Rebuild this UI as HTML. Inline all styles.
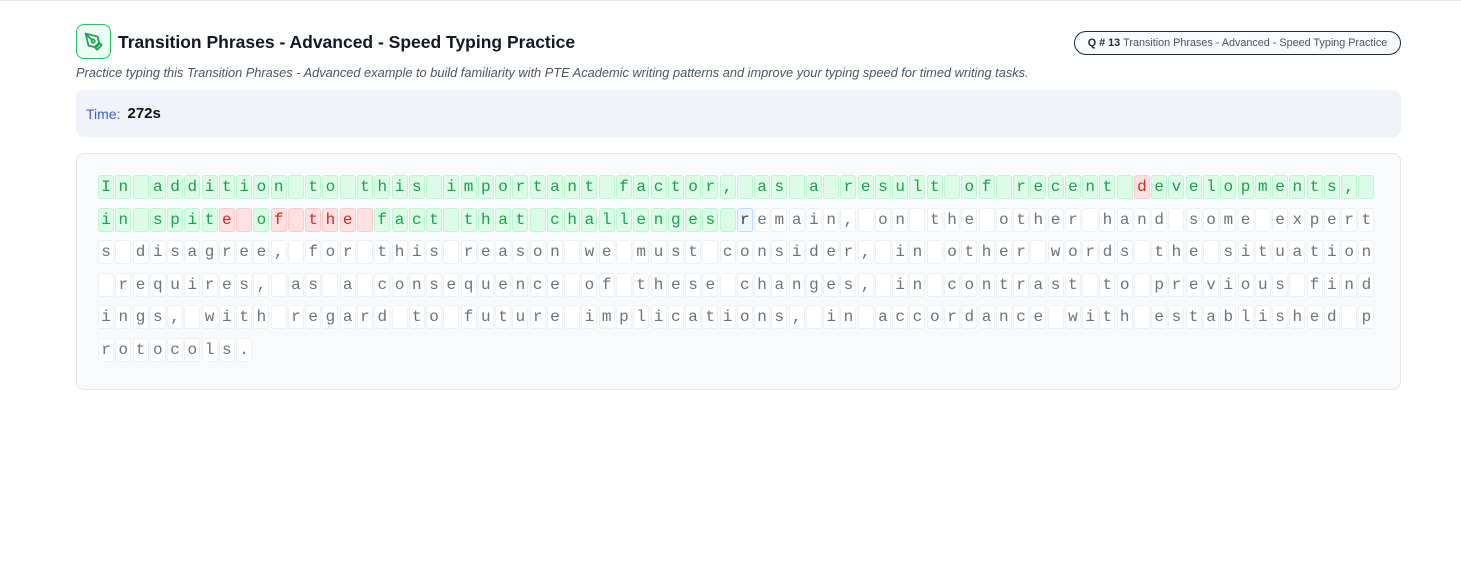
<!DOCTYPE html>
<html><head><meta charset="utf-8"><style>
*{box-sizing:border-box;margin:0;padding:0}
body{width:1461px;height:563px;background:#fff;font-family:"Liberation Sans",sans-serif;position:relative;overflow:hidden;border-top:1px solid #e5e7eb}
.icon{position:absolute;left:76px;top:23px;width:35px;height:35px;border:1.5px solid #22c55e;border-radius:8px;background:#ecfdf3;display:flex;align-items:center;justify-content:center}
h1{position:absolute;left:118px;top:31px;font-size:17.5px;font-weight:bold;color:#111827}
.sub{position:absolute;left:76px;top:64px;font-size:12.8px;font-style:italic;color:#4b5563}
.badge{position:absolute;left:1074px;top:30px;width:327px;height:24px;border:1px solid #1f2937;border-radius:12px;background:#f8fafc;font-size:10.8px;color:#4b5563;display:flex;align-items:center;justify-content:center}
.badge b{color:#1f2937;margin-right:3px}
.timer{position:absolute;left:76px;top:89px;width:1325px;height:47px;background:#f0f3f8;border-radius:8px;display:flex;align-items:center;padding-left:10px;font-size:14px}
.timer span{color:#3b5bdb;margin-right:7px}
.timer b{font-size:15px;color:#111}
.box{position:absolute;left:76px;top:152px;width:1325px;height:237px;background:#f8fafc;border:1px solid #e5e7eb;border-radius:8px}
.lines{position:absolute;left:98px;top:174px}
.ln{display:flex;height:24px;margin-bottom:8.5px}
.c{width:16px;height:24px;margin-right:1.27px;border:1px solid #eef1f4;border-radius:3px;background:#fff;font-family:"Liberation Mono",monospace;font-size:16px;line-height:22px;text-align:center;color:#6b7280}
.g{background:#dcfce7;border-color:#bbf7d0;color:#16a34a}
.r{background:#fee2e2;border-color:#fecaca;color:#dc2626}
.k{background:#eff6ff;border-color:#bfdbfe;color:#374151}
</style></head><body>
<div class="icon"><svg width="20" height="20" viewBox="0 0 24 24" fill="none" stroke="#16a34a" stroke-width="2" stroke-linecap="round" stroke-linejoin="round"><path d="M15.7 21.3l5.6-5.6-2-2-5.6 5.6z"/><path d="M18 13l-1.5-7.5L2 2l3.5 14.5L13 18z"/><path d="M2 2l7.6 7.6"/><circle cx="11" cy="11" r="2"/></svg></div>
<h1>Transition Phrases - Advanced - Speed Typing Practice</h1>
<div class="sub">Practice typing this Transition Phrases - Advanced example to build familiarity with PTE Academic writing patterns and improve your typing speed for timed writing tasks.</div>
<div class="badge"><b>Q # 13</b> Transition Phrases - Advanced - Speed Typing Practice</div>
<div class="timer"><span>Time:</span><b>272s</b></div>
<div class="box"></div>
<div class="lines" id="L"></div>
<script>
var lines=["In addition to this important factor, as a result of recent developments, ","in spite of the fact that challenges remain, on the other hand some expert","s disagree, for this reason we must consider, in other words the situation"," requires, as a consequence of these changes, in contrast to previous find","ings, with regard to future implications, in accordance with established p","rotocols."];
var red={"0_60":1,"1_7":1,"1_8":1,"1_10":1,"1_11":1,"1_12":1,"1_13":1,"1_14":1,"1_15":1};
var h="";
lines.forEach(function(s,i){h+='<div class="ln">';for(var j=0;j<s.length;j++){var cl="c";
if(i==0||(i==1&&j<37))cl+=red[i+"_"+j]?" r":" g";else if(i==1&&j==37)cl+=" k";
h+='<div class="'+cl+'">'+(s[j]==" "?"&nbsp;":s[j])+'</div>';}h+='</div>';});
document.getElementById("L").innerHTML=h;
</script>
</body></html>
